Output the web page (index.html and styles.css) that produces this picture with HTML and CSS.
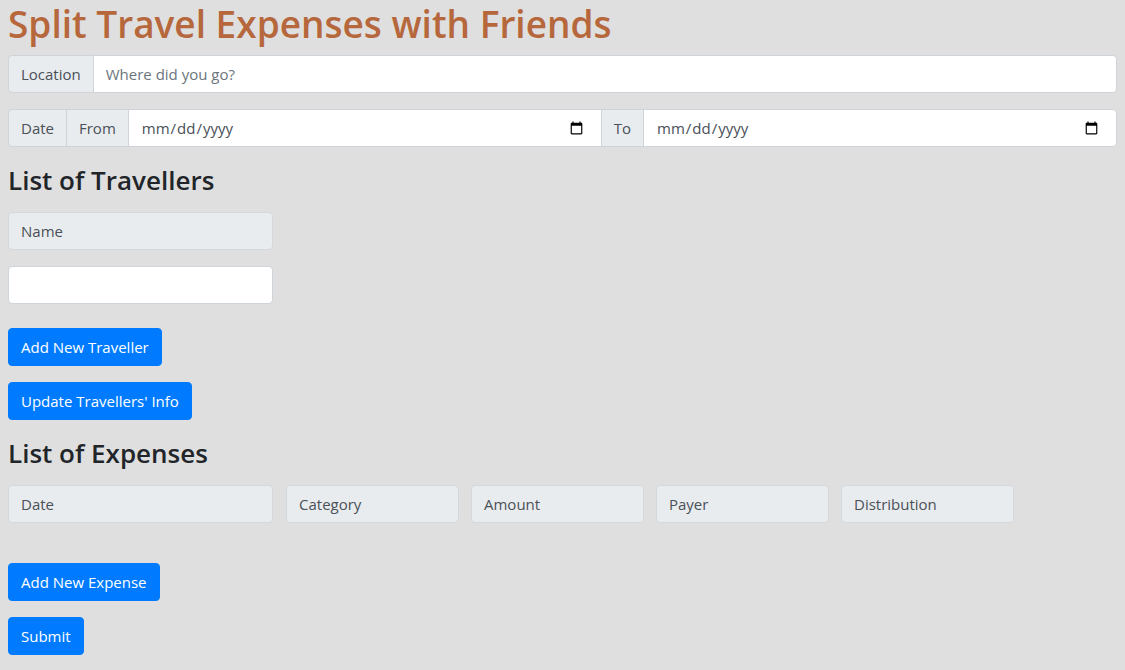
FILE: index.html
```html
<!DOCTYPE html>
<html lang="en">
<head>
<meta charset="utf-8">
<title>Split Travel Expenses with Friends</title>
<link rel="stylesheet" href="styles.css">
</head>
<body>
<div class="page">
  <h1 class="title">Split Travel Expenses with Friends</h1>

  <div class="input-group">
    <span class="addon">Location</span>
    <input class="control" type="text" placeholder="Where did you go?">
  </div>

  <div class="input-group">
    <span class="addon">Date</span>
    <span class="addon">From</span>
    <input class="control date" type="date">
    <span class="addon">To</span>
    <input class="control date" type="date">
  </div>

  <h3 class="section">List of Travellers</h3>
  <div class="travellers">
    <div class="head-box traveller-col">Name</div>
    <input class="field traveller-col" type="text">
  </div>
  <div class="actions">
    <button class="btn" type="button">Add New Traveller</button>
    <button class="btn" type="button">Update Travellers' Info</button>
  </div>

  <h3 class="section">List of Expenses</h3>
  <div class="expense-head">
    <div class="head-box date-col">Date</div>
    <div class="head-box">Category</div>
    <div class="head-box">Amount</div>
    <div class="head-box">Payer</div>
    <div class="head-box">Distribution</div>
  </div>
  <div class="actions expense-actions">
    <button class="btn" type="button">Add New Expense</button>
    <button class="btn" type="submit">Submit</button>
  </div>
</div>
</body>
</html>
```

FILE: styles.css
```css
* { box-sizing: border-box; }

html, body {
  margin: 0;
  padding: 0;
  background: #dfdfdf;
}

body {
  font-family: "Open Sans", "Noto Sans", "Liberation Sans", sans-serif;
  font-size: 15px;
  color: #212529;
}

.page {
  padding: 0 8px;
  display: flex;
  flex-direction: column;
  align-items: flex-start;
}

.title {
  margin: 0 0 8px 0;
  font-size: 37px;
  line-height: 47px;
  font-weight: 600;
  color: #b6673c;
  letter-spacing: 0;
}

.input-group {
  display: flex;
  width: 100%;
  height: 38px;
  margin-bottom: 16px;
}

.addon {
  display: flex;
  align-items: center;
  padding: 0 12px;
  background: #e9ecef;
  border: 1px solid #ced4da;
  color: #495057;
  font-size: 15px;
  white-space: nowrap;
}

.addon + .addon,
.control + .addon {
  margin-left: -1px;
}

.input-group > :first-child {
  border-radius: 4px 0 0 4px;
}

.input-group > :last-child {
  border-radius: 0 4px 4px 0;
}

.control {
  flex: 1;
  min-width: 0;
  height: 38px;
  margin-left: -1px;
  padding: 0 12px;
  border: 1px solid #ced4da;
  background: #fff;
  color: #495057;
  font-family: inherit;
  font-size: 15px;
}

.control.date {
  padding-right: 15px;
}

.control::placeholder {
  color: #6c757d;
}

.section {
  margin: 0 0 15px 0;
  font-size: 26px;
  line-height: 34px;
  font-weight: 600;
  color: #212529;
  letter-spacing: 0;
}

.travellers {
  display: flex;
  flex-direction: column;
  gap: 16px;
  margin-bottom: 24px;
}

.traveller-col {
  width: 265px;
}

.head-box {
  height: 38px;
  display: flex;
  align-items: center;
  padding: 0 12px;
  background: #e9ecef;
  border: 1px solid #d4d8dc;
  border-radius: 4px;
  color: #495057;
  font-size: 15px;
}

.field {
  height: 38px;
  padding: 0 12px;
  background: #fff;
  border: 1px solid #ced4da;
  border-radius: 4px;
  font-family: inherit;
  font-size: 15px;
}

.actions {
  display: flex;
  flex-direction: column;
  align-items: flex-start;
  gap: 16px;
  margin-bottom: 16px;
}

.btn {
  height: 38px;
  padding: 0 12px;
  border: 1px solid #007bff;
  border-radius: 4px;
  background: #007bff;
  color: #fff;
  font-family: inherit;
  font-size: 15px;
  line-height: 24px;
  cursor: pointer;
}

.expense-head {
  display: grid;
  grid-template-columns: 266px 173px 173px 173px 173px;
  column-gap: 12px;
  margin-bottom: 40px;
}

.expense-head > .date-col {
  width: 265px;
}
```
